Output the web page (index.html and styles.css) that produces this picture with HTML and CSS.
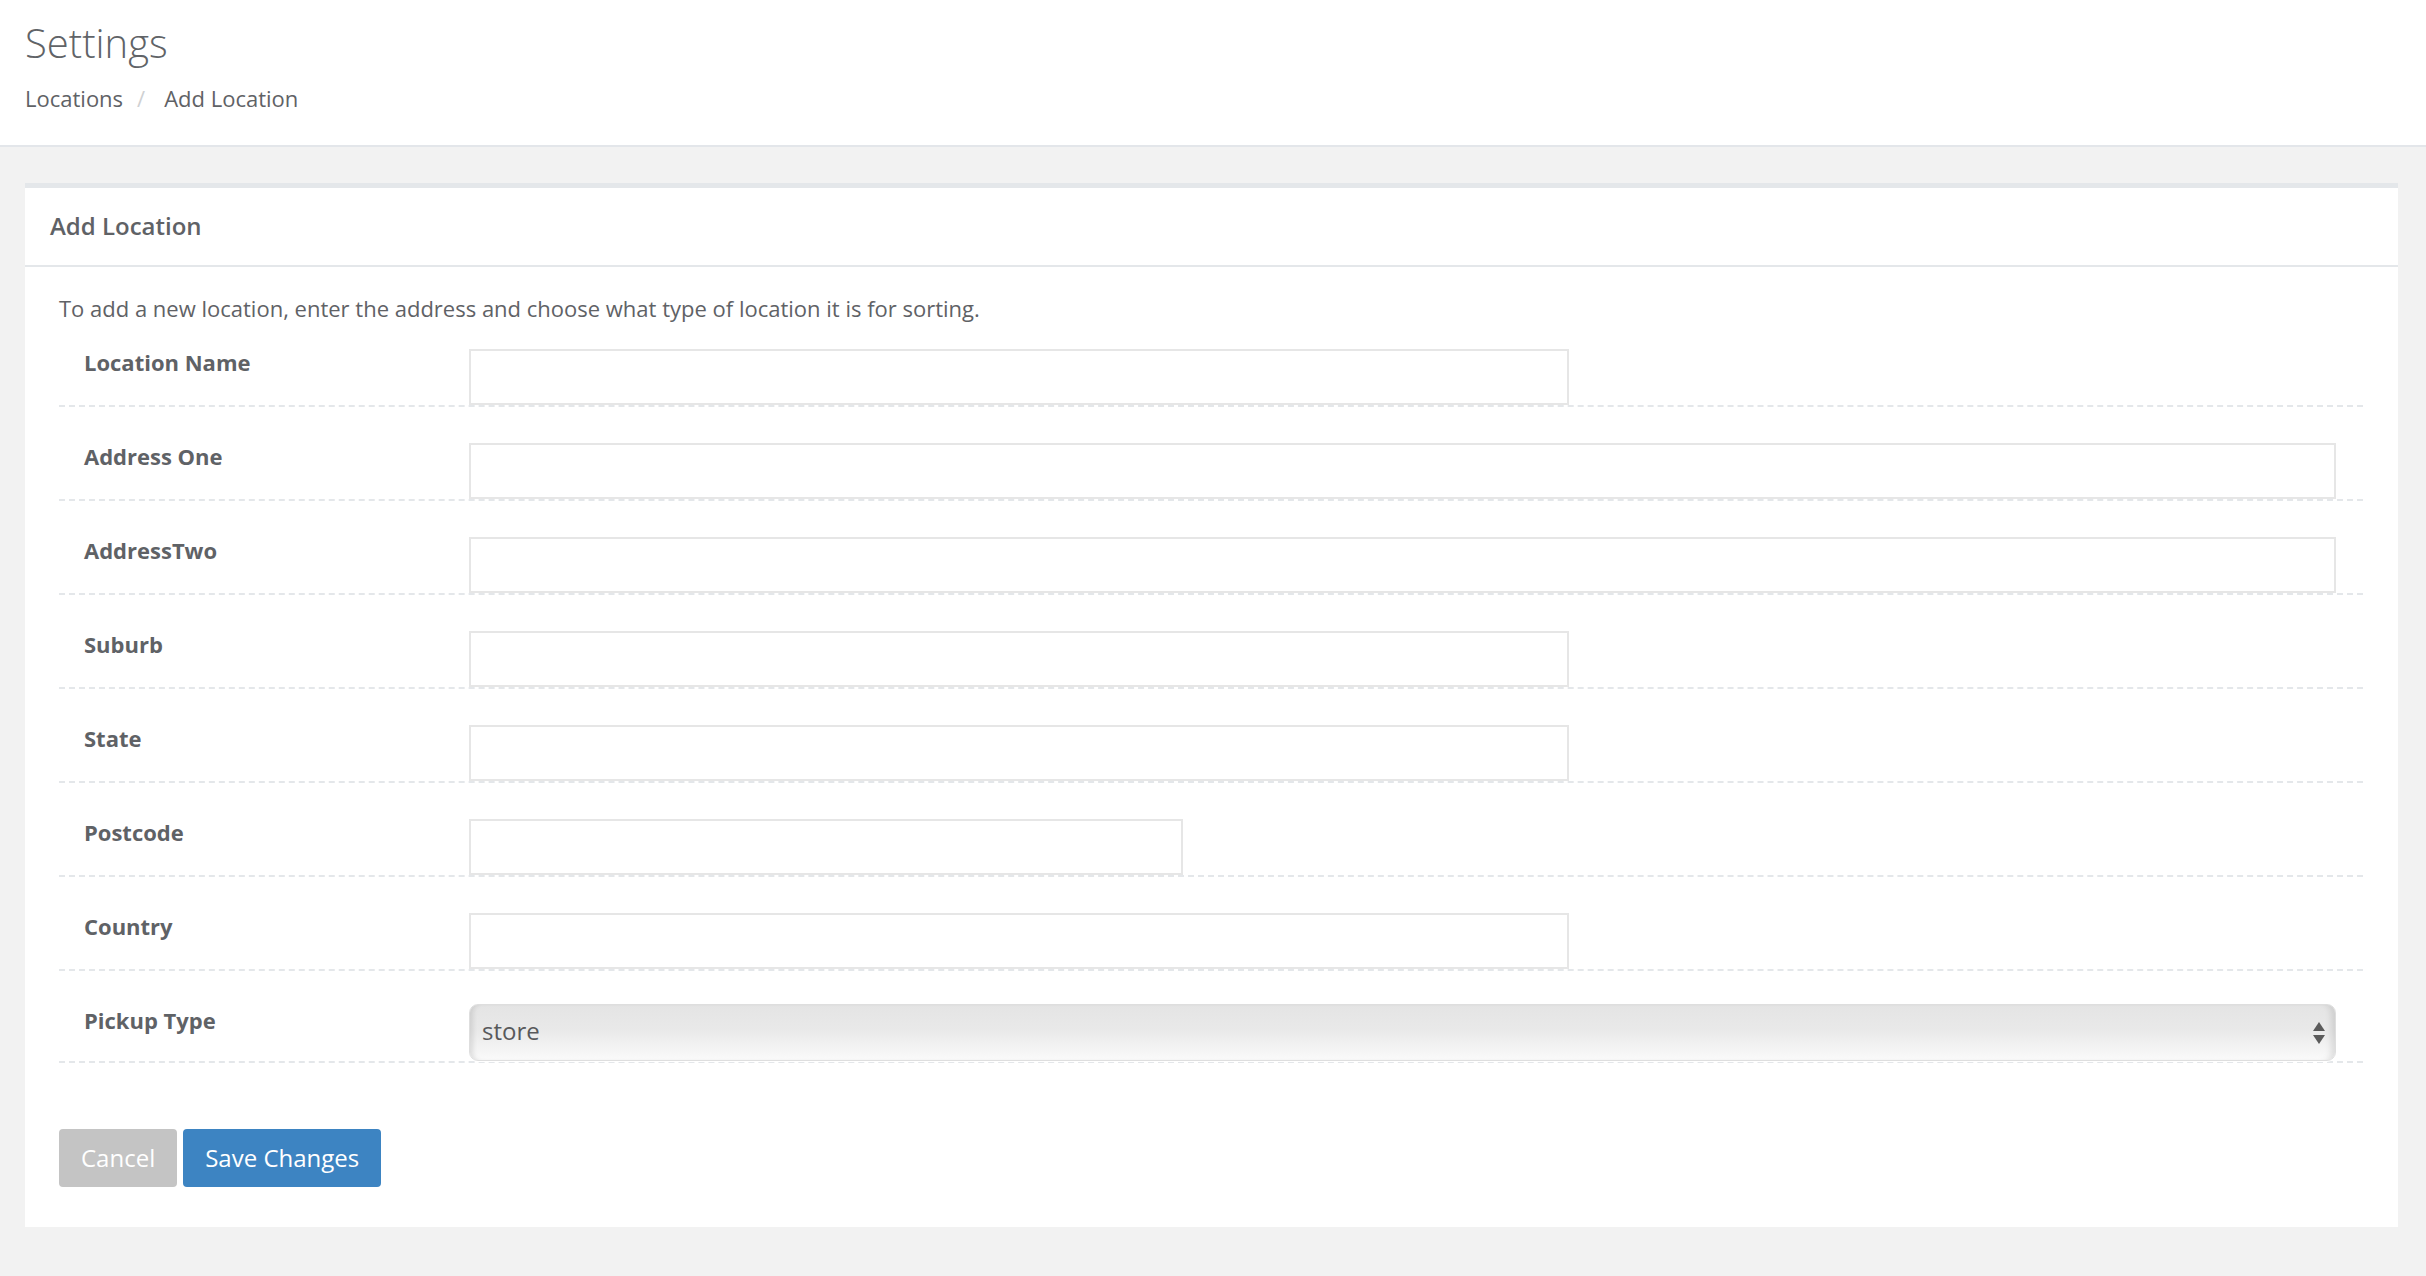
FILE: index.html
```html
<!DOCTYPE html>
<html lang="en">
<head>
    <meta charset="UTF-8">
    <meta name="viewport" content="width=device-width, initial-scale=1.0">
    <title>Settings - Add Location</title>
    <link rel="stylesheet" href="styles.css">
</head>
<body>
    <div class="page-header">
        <h1>Settings</h1>
        <ol class="breadcrumb">
            <li><a href="#">Locations</a></li>
            <li class="active">Add Location</li>
        </ol>
    </div>

    <div class="panel">
        <div class="panel-heading">Add Location</div>
        <div class="panel-body">
            <p class="intro">To add a new location, enter the address and choose what type of location it is for sorting.</p>
            <form id="location-form">
                <!-- Address -->
                <div class="form-row">
                    <label for="name">Location Name</label>
                    <div class="field"><input type="text" id="name" class="input-md"></div>
                </div>
                <div class="form-row">
                    <label for="address1">Address One</label>
                    <div class="field"><input type="text" id="address1"></div>
                </div>
                <div class="form-row">
                    <label for="address2">AddressTwo</label>
                    <div class="field"><input type="text" id="address2"></div>
                </div>
                <div class="form-row">
                    <label for="suburb">Suburb</label>
                    <div class="field"><input type="text" id="suburb" class="input-md"></div>
                </div>
                <div class="form-row">
                    <label for="state">State</label>
                    <div class="field"><input type="text" id="state" class="input-md"></div>
                </div>
                <div class="form-row">
                    <label for="postcode">Postcode</label>
                    <div class="field"><input type="text" id="postcode" class="input-sm"></div>
                </div>
                <div class="form-row">
                    <label for="country">Country</label>
                    <div class="field"><input type="text" id="country" class="input-md"></div>
                </div>

                <!-- Sorting -->
                <div class="form-row">
                    <label for="pickup">Pickup Type</label>
                    <div class="field select-wrap">
                        <select id="pickup">
                            <option value="store">store</option>
                            <option value="warehouse">warehouse</option>
                            <option value="depot">depot</option>
                        </select>
                        <svg class="select-arrows" width="12" height="22" viewBox="0 0 12 22">
                            <polygon points="0,9 6,0 12,9" fill="#5b5b5b"/>
                            <polygon points="0,13 12,13 6,22" fill="#5b5b5b"/>
                        </svg>
                    </div>
                </div>

                <div class="form-actions">
                    <button type="button" class="btn btn-cancel">Cancel</button>
                    <button type="submit" class="btn btn-primary">Save Changes</button>
                </div>
            </form>
        </div>
    </div>
</body>
</html>
```

FILE: styles.css
```css
html, body {
    margin: 0;
    background-color: #f2f2f2;
}
body {
    font-family: "Open Sans", "Liberation Sans", Arial, sans-serif;
    font-size: 22px;
    line-height: 31px;
    color: #5f6266;
}
.page-header {
    background-color: #fff;
    border-bottom: 2px solid #e3e6ea;
    padding: 20px 25px 31px;
}
.page-header h1 {
    margin: 0;
    font-size: 40px;
    font-weight: 300;
    line-height: 46px;
    color: #606367;
}
.breadcrumb {
    list-style: none;
    display: flex;
    margin: 17px 0 0;
    padding: 0;
}
.breadcrumb a {
    color: inherit;
    text-decoration: none;
}
.breadcrumb li + li::before {
    content: "/";
    color: #cfd1d3;
    padding: 0 19px 0 14px;
}
.panel {
    background-color: #fff;
    border-top: 5px solid #e4e7ea;
    margin: 36px 28px 49px 25px;
}
.panel-heading {
    padding: 21px 25px 22px;
    border-bottom: 2px solid #e4e7ea;
    font-size: 24px;
    font-weight: 600;
    line-height: 34px;
}
.panel-body {
    padding: 26px 35px 40px 34px;
}
.intro {
    margin: 0;
}
.form-row {
    display: flex;
    align-items: flex-start;
    padding-top: 36px;
    border-bottom: 2px dashed #e4e7ea;
}
.form-row:first-child {
    padding-top: 25px;
}
.form-row label {
    box-sizing: border-box;
    width: 410px;
    padding-left: 25px;
    font-weight: 700;
    font-size: 22px;
    margin-top: -2px;
}
.field {
    flex: 1;
    padding-right: 27px;
}
.field input {
    display: block;
    box-sizing: border-box;
    width: 100%;
    height: 56px;
    padding: 0 12px;
    border: 2px solid #e6e6e6;
    border-radius: 0;
    font: inherit;
    color: #555;
    background: #fff;
}
.field input.input-md {
    width: 1100px;
}
.field input.input-sm {
    width: 714px;
}
.select-wrap {
    position: relative;
    margin-top: -3px;
}
.select-wrap select {
    display: block;
    box-sizing: border-box;
    width: 100%;
    height: 57px;
    padding: 0 12px 4px;
    -webkit-appearance: none;
    appearance: none;
    border: 1px solid #dedede;
    border-radius: 9px;
    background: linear-gradient(#e4e4e4, #e9e9e9 45%, #fafafa);
    box-shadow: inset 6px 0 5px -3px rgba(0, 0, 0, 0.1), inset -8px 0 6px -4px rgba(0, 0, 0, 0.1), 0 1px 0 #fff;
    font-family: inherit;
    font-size: 24px;
    color: #58595b;
}
.select-arrows {
    position: absolute;
    right: 38px;
    top: 50%;
    transform: translateY(-50%);
    pointer-events: none;
}
.form-actions {
    display: flex;
    gap: 6px;
    margin-top: 66px;
}
.btn {
    height: 58px;
    padding: 0 22px;
    border: none;
    border-radius: 4px;
    font-family: inherit;
    font-size: 24px;
    line-height: 56px;
    color: #fff;
    cursor: pointer;
}
.btn-cancel {
    background-color: #c4c4c4;
}
.btn-primary {
    background-color: #3d84c2;
}
.btn-primary:hover {
    background-color: #3677b0;
}
```
